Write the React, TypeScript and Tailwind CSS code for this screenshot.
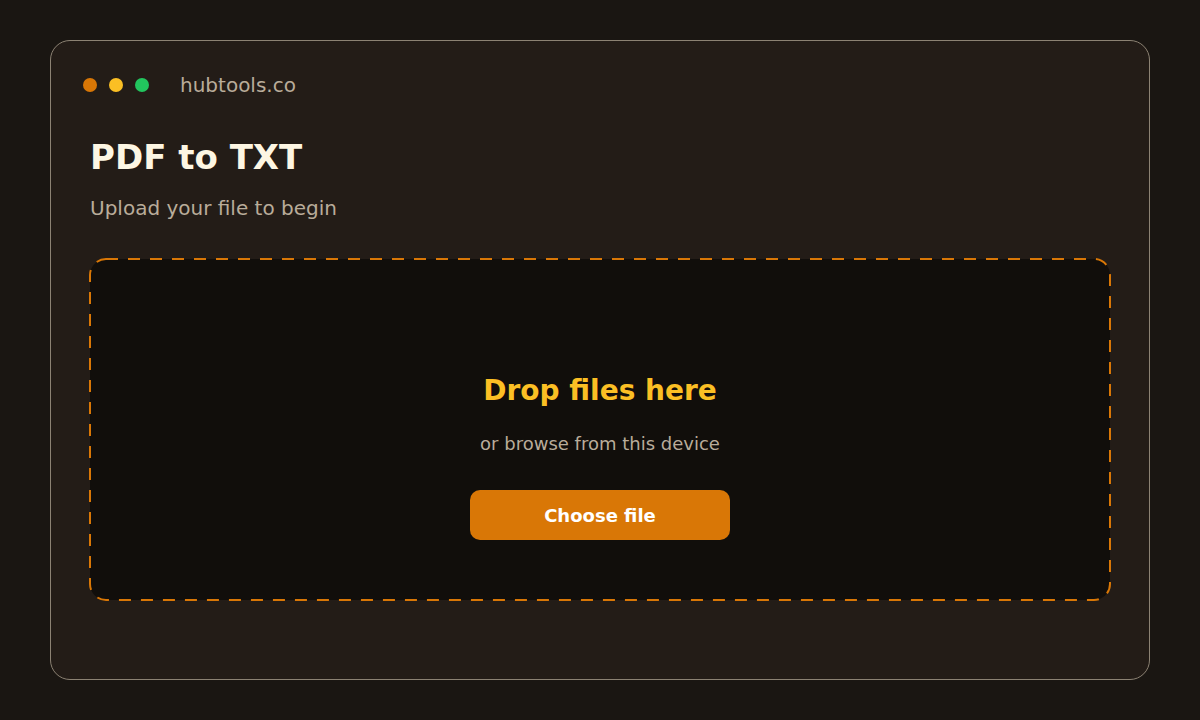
import React from 'react';

const dots = ['bg-[#d97706]', 'bg-[#fbbf24]', 'bg-[#22c55e]'];

export default function App() {
  return (
    <div className="min-h-[720px] bg-[#1a1612] px-[50px] py-10 font-['DejaVu_Sans',sans-serif]">
      <div className="flex h-[640px] flex-col rounded-[20px] border border-[#8c8273] bg-[#231c17]">
        {/* window chrome */}
        <div className="flex h-[88px] items-center pl-8">
          <div className="flex gap-3">
            {dots.map(c => (
              <span key={c} className={`h-3.5 w-3.5 rounded-full ${c}`} />
            ))}
          </div>
          <span className="ml-[31px] text-[20px] text-[#b9ac9a]">hubtools.co</span>
        </div>

        <div className="flex flex-1 flex-col px-[39px] pb-[79px]">
          <h1 className="mt-[4px] text-[34px] font-bold leading-[48px] text-[#fdf6e3]">PDF to TXT</h1>
          <p className="mt-[13px] text-[20px] leading-7 text-[#b9ac9a]">Upload your file to begin</p>

          <div className="relative mt-[37px] flex flex-1 flex-col items-center rounded-2xl bg-[#110e0b] pt-[114px]">
            {/* dashed outline, stroke centred on the edge */}
            <svg className="pointer-events-none absolute inset-0 h-full w-full overflow-visible">
              <rect
                x="0"
                y="0"
                width="100%"
                height="100%"
                rx="16"
                fill="none"
                stroke="#d97706"
                strokeWidth="2"
                strokeDasharray="12 10"
              />
            </svg>
            <h2 className="text-[28px] font-bold leading-9 text-[#fbbf24]">Drop files here</h2>
            <p className="mt-[21px] text-[18px] leading-7 text-[#b9ac9a]">or browse from this device</p>
            <button className="mt-[32px] h-[50px] w-[260px] rounded-[10px] bg-[#d97706] text-[18px] font-bold text-white">
              Choose file
            </button>
          </div>
        </div>
      </div>
    </div>
  );
}
